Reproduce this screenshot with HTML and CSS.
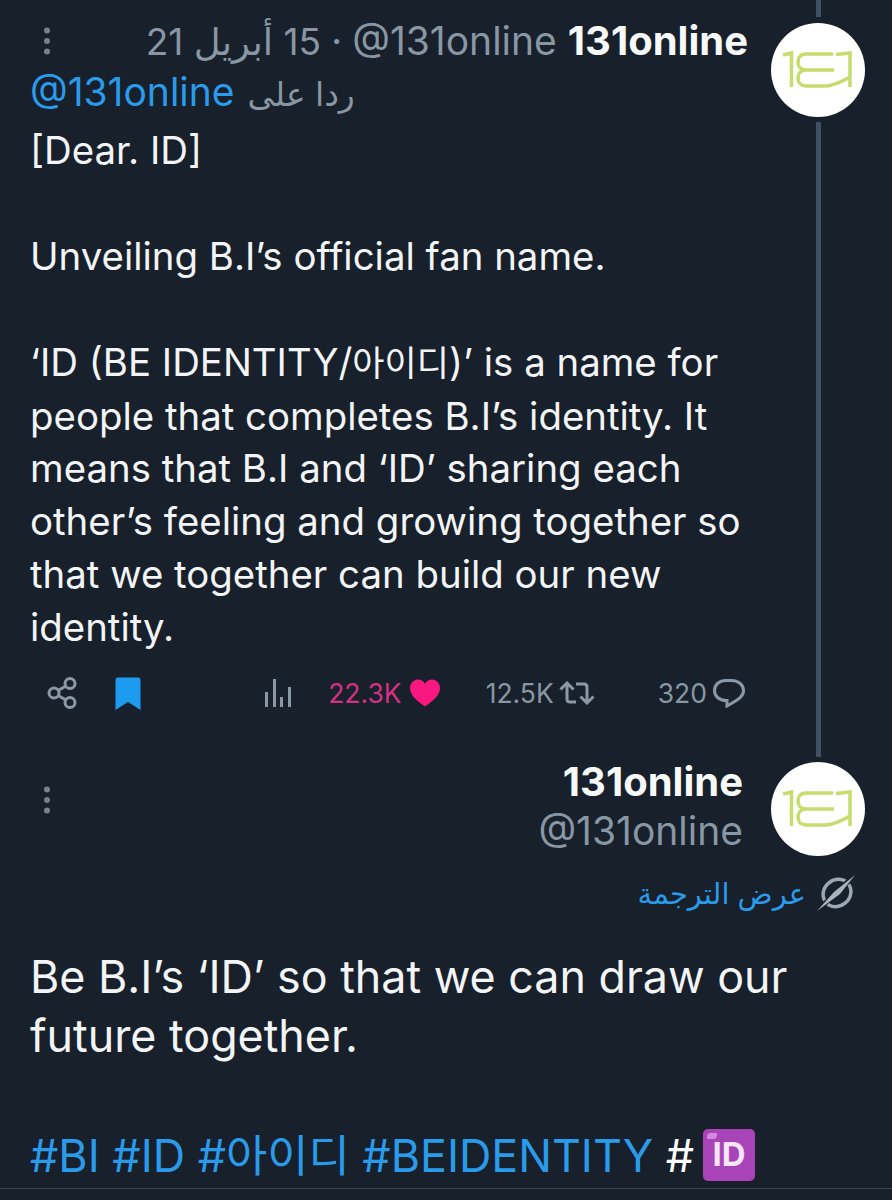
FILE: index.html
```html
<!DOCTYPE html>
<html lang="en">
<head>
<meta charset="utf-8">
<title>131online</title>
<link rel="stylesheet" href="styles.css">
</head>
<body>
<svg class="defs" width="0" height="0" aria-hidden="true">
  <symbol id="logo" viewBox="0 0 94 94">
    <g fill="none" stroke="#c6dc6c" stroke-width="3.500">
      <path d="M12 32L20.500 30V64"/>
      <path d="M62 31H35C29 31 27 35 27 39C27 44 30 47 35 47H63M35 47C30 47 27 50 27 55C27 60 30 63 35 63H54C62 63 72 58 79 54"/>
      <path d="M65 31.500L79 30V64"/>
    </g>
  </symbol>
  <symbol id="dots" viewBox="0 0 8 28">
    <circle cx="4" cy="3.500" r="3" fill="#75828e"/>
    <circle cx="4" cy="14" r="3" fill="#75828e"/>
    <circle cx="4" cy="24.500" r="3" fill="#75828e"/>
  </symbol>
</svg>

<main class="thread">
  <article class="tweet tweet-first">
    <div class="tweet-main">
      <header class="head-row">
        <svg class="dots"><use href="#dots"/></svg>
        <div class="head-text">
          <span class="muted date" dir="rtl">15 أبريل 21</span>
          <span class="muted sep">·</span>
          <span class="muted handle">@131online</span>
          <strong class="name">131online</strong>
        </div>
      </header>
      <div class="reply-row">
        <a class="link">@131online</a>
        <span class="muted reply-label" dir="rtl">ردا على</span>
      </div>
      <div class="body-text">
        <p>[Dear. ID]</p>
        <p>Unveiling B.I’s official fan name.</p>
        <p>‘ID (BE IDENTITY/<span class="ko">아이디</span>)’ is a name for<br>people that completes B.I’s identity. It<br>means that B.I and ‘ID’ sharing each<br>other’s feeling and growing together so<br>that we together can build our new<br>identity.</p>
      </div>
      <footer class="actions">
        <div class="actions-left">
          <svg class="ico-share" viewBox="0 0 30 32" fill="none" stroke="#8b98a5" stroke-width="3">
            <circle cx="7" cy="16" r="5"/><circle cx="23" cy="6.500" r="5"/><circle cx="23" cy="25.500" r="5"/>
            <path d="M11.500 13.300L18.500 9.200M11.500 18.700L18.500 22.800"/>
          </svg>
          <svg class="ico-bookmark" viewBox="0 0 26 33"><path d="M0.500 3Q0.500 0.500 3 0.500H23Q25.500 0.500 25.500 3V33L13 25L0.500 33Z" fill="#1d9bf0"/></svg>
        </div>
        <div class="actions-right">
          <svg class="ico-views" viewBox="0 0 26 28" fill="#8b98a5">
            <rect x="0" y="13" width="3" height="15"/><rect x="8" y="0" width="3" height="28"/><rect x="15" y="18" width="3" height="10"/><rect x="23" y="8" width="3" height="20"/>
          </svg>
          <span class="stat stat-like">22.3K<svg class="ico-heart" viewBox="0 0 32 29"><path d="M16 29C9 24 0 18 0 9C0 4 4 0 8.500 0C12 0 14.500 2 16 4.500C17.500 2 20 0 23.500 0C28 0 32 4 32 9C32 18 23 24 16 29Z" fill="#f91880"/></svg></span>
          <span class="stat stat-rt">12.5K<svg class="ico-rt" viewBox="0 0 36 24" fill="none" stroke="#8b98a5" stroke-width="3"><path d="M1.500 8.500L8 2L14.500 8.500M8 2.500V18Q8 21 11 21H17M17 3H25Q28 3 28 6V21.500M21.500 15.500L28 22L34.500 15.500"/></svg></span>
          <span class="stat stat-reply">320<svg class="ico-reply" viewBox="0 0 32 29" fill="none" stroke="#8b98a5" stroke-width="3"><path d="M13 1.500H18.500C25 1.500 30.500 5.500 30.500 11.500C30.500 17 26 20 20 23.500L14 27V21.500H13C6.500 21.500 1.500 17.500 1.500 11.500C1.500 5.500 6.500 1.500 13 1.500Z"/></svg></span>
        </div>
      </footer>
    </div>
    <aside class="rail">
      <div class="line line-top"></div>
      <svg class="avatar"><use href="#logo"/></svg>
      <div class="line line-fill"></div>
    </aside>
  </article>

  <article class="tweet tweet-second">
    <div class="author">
      <svg class="dots dots-second"><use href="#dots"/></svg>
      <div class="author-names">
        <strong class="name">131online</strong>
        <span class="muted handle-big">@131online</span>
      </div>
      <svg class="avatar"><use href="#logo"/></svg>
    </div>
    <div class="translate-row">
      <span class="link translate" dir="rtl">عرض الترجمة</span>
      <svg class="ico-translate" viewBox="0 0 38 36" fill="none">
        <ellipse cx="20" cy="18" rx="14.500" ry="13" transform="rotate(-40 20 18)" stroke="#9ba8b3" stroke-width="3.500"/>
        <path d="M38 0L0 36" stroke="#17202b" stroke-width="5"/>
        <path d="M38 0L23 19L0 36L17 17Z" fill="#a8b4be"/>
      </svg>
    </div>
    <p class="big-text">Be B.I’s ‘ID’ so that we can draw our<br>future together.</p>
    <p class="tags"><a class="link">#BI</a> <a class="link">#ID</a> <a class="link">#아이디</a> <a class="link">#BEIDENTITY</a> <span class="hash">#<span class="id-badge"><span class="id-gloss"></span>ID</span></span></p>
    <div class="divider"></div>
  </article>
</main>
</body>
</html>
```

FILE: styles.css
```css
* { box-sizing: border-box; }

html, body {
  margin: 0;
  height: 1200px;
  overflow: hidden;
  background: #17202b;
}

body {
  font-family: Inter, "Noto Sans CJK KR", "DejaVu Sans", sans-serif;
  color: #f2f4f5;
}

.defs { position: absolute; }

.thread {
  display: flex;
  flex-direction: column;
}

.tweet-first {
  display: flex;
  justify-content: space-between;
  height: 760px;
  padding: 0 27px 0 30px;
}

.tweet-main {
  width: 718px;
  display: flex;
  flex-direction: column;
  padding-top: 17px;
}

.head-row {
  display: flex;
  justify-content: space-between;
  align-items: center;
  height: 47px;
}

.dots {
  width: 8px;
  height: 28px;
  margin-left: 13px;
  flex: none;
}

.head-text {
  display: flex;
  align-items: baseline;
  gap: 11px;
  font-size: 39px;
  white-space: nowrap;
}

.muted { color: #8996a3; }

.date { font-size: 37px; }
.sep { margin: 0 -1px; }

.name {
  font-size: 40px;
  font-weight: 700;
  color: #f7f9f9;
}

.reply-row {
  display: flex;
  align-items: baseline;
  gap: 13px;
  height: 50px;
  margin-top: 4px;
  font-size: 39px;
}

.link {
  color: #2a9bea;
}

.reply-label {
  font-size: 33px;
}

.body-text {
  font-size: 38.400px;
  line-height: 52.900px;
  margin-top: 6px;
  white-space: nowrap;
}

.ko { font-size: 35px; }

.body-text p {
  margin: 0 0 52.900px;
}

.body-text p:last-child {
  margin-bottom: 0;
}

.actions {
  display: flex;
  justify-content: space-between;
  align-items: center;
  height: 44px;
  margin-top: 17px;
  padding: 0 3px 0 17px;
}

.actions-left {
  display: flex;
  align-items: center;
  gap: 38px;
}

.ico-share { width: 30px; height: 32px; }
.ico-bookmark { width: 26px; height: 33px; }

.actions-right {
  display: flex;
  align-items: center;
}

.ico-views { width: 26px; height: 28px; }

.stat {
  display: flex;
  align-items: center;
  font-size: 26.500px;
  color: #8996a3;
}

.stat-like { color: #d43182; margin-left: 37px; gap: 8px; }
.stat-rt { margin-left: 46px; gap: 5px; }
.stat-reply { margin-left: 63px; gap: 6px; }

.ico-heart { width: 30px; height: 28px; }
.ico-rt { width: 36px; height: 24px; }
.ico-reply { width: 32px; height: 29px; }

.rail {
  width: 94px;
  display: flex;
  flex-direction: column;
  align-items: center;
}

.line {
  width: 5px;
  background: #3f5063;
}

.line-top { height: 17px; margin-bottom: 6px; }
.line-fill { flex: 1; margin-top: 5px; margin-bottom: 3px; }

.avatar {
  width: 94px;
  height: 94px;
  border-radius: 50%;
  background: #fff;
  flex: none;
}

.tweet-second {
  padding: 2px 27px 0 30px;
}

.author {
  display: flex;
  align-items: flex-start;
  height: 94px;
}

.dots-second {
  margin-top: 24px;
}

.author-names {
  margin-left: auto;
  margin-right: 28px;
  margin-top: -5px;
  display: flex;
  flex-direction: column;
  align-items: flex-end;
  line-height: 49px;
}

.handle-big {
  font-size: 39px;
}

.translate-row {
  display: flex;
  justify-content: flex-end;
  align-items: center;
  gap: 11px;
  height: 48px;
  margin-top: 13px;
  margin-right: 10px;
}

.translate {
  font-size: 29px;
}

.ico-translate { width: 38px; height: 36px; }

.big-text {
  margin: 31px 0 0;
  font-size: 44.800px;
  line-height: 59px;
}

.tags {
  margin: 61px 0 0;
  height: 59px;
  font-size: 44.800px;
  line-height: 59px;
  white-space: nowrap;
}

.hash { color: #fff; }

.id-badge {
  display: inline-flex;
  position: relative;
  align-items: center;
  justify-content: center;
  width: 52px;
  height: 52px;
  margin-left: 9px;
  border-radius: 5px;
  background: #a844b8;
  color: #f6e6f8;
  font-size: 33px;
  font-weight: 700;
  vertical-align: 6px;
  line-height: 1;
}

.id-gloss {
  position: absolute;
  top: 4px;
  left: 4px;
  width: 10px;
  height: 6px;
  border-radius: 4px 0 4px 0;
  background: #d588e0;
}

.divider {
  height: 1px;
  background: #3e4650;
  margin: 2px -30px 0 -30px;
}
```
